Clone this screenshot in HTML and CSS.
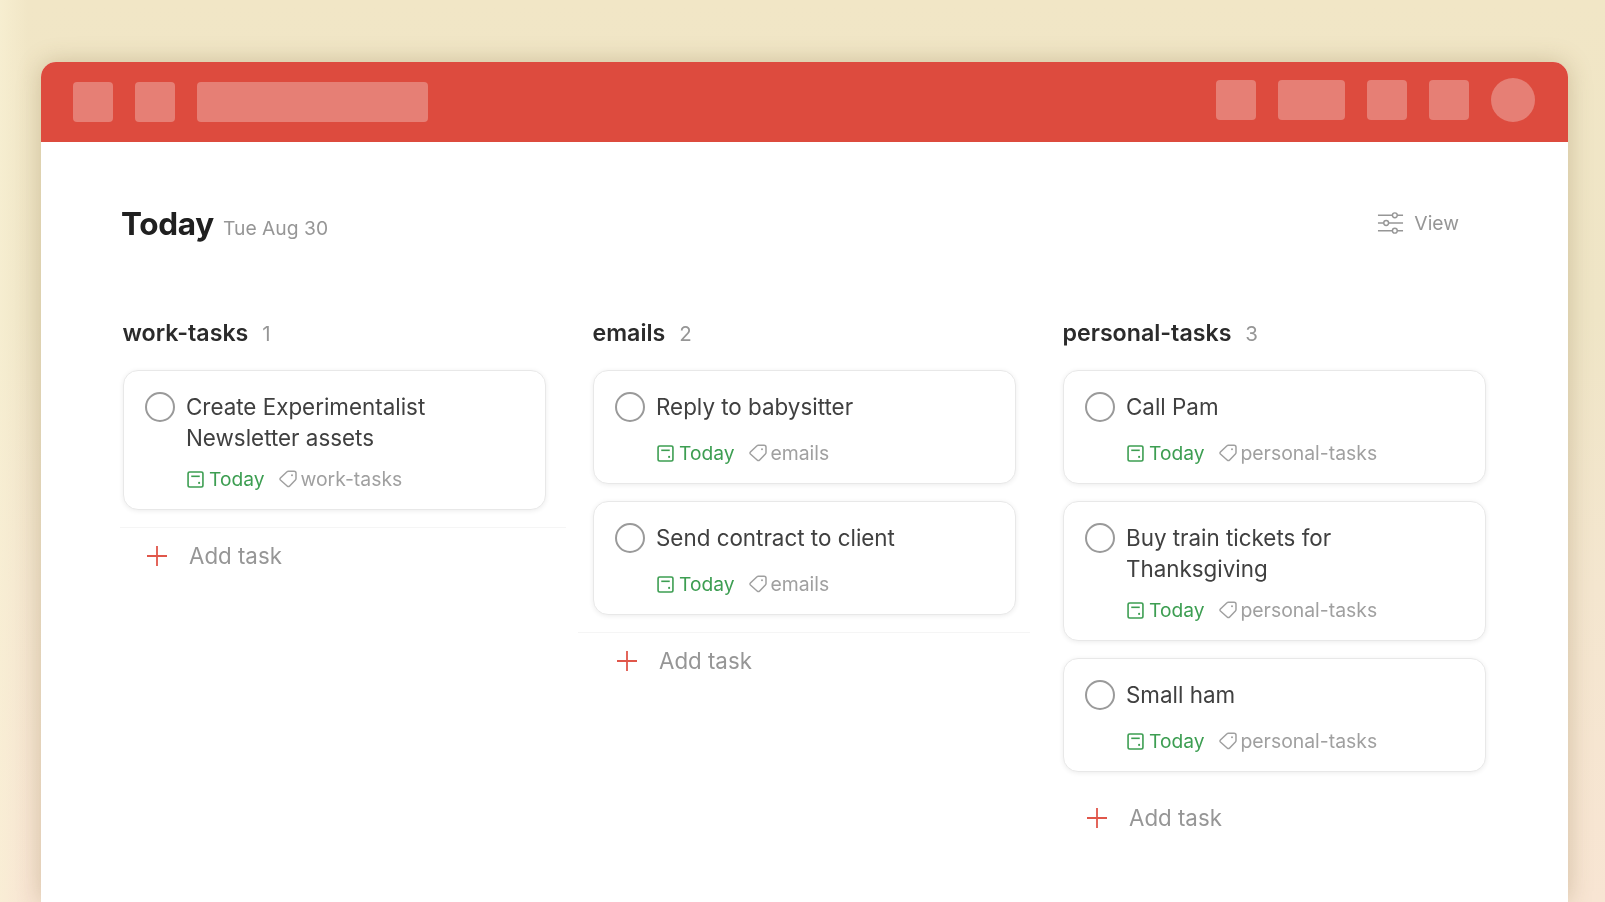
FILE: index.html
```html
<!DOCTYPE html>
<html lang="en">
<head>
<meta charset="utf-8">
<title>Today</title>
<link rel="stylesheet" href="styles.css">
</head>
<body>
<svg class="defs" width="0" height="0" aria-hidden="true">
  <symbol id="cal" viewBox="0 0 16 16"><rect x="1" y="1" width="14" height="14" rx="1.6" fill="none" stroke="currentColor" stroke-width="1.5"/><path d="M4 5h8" fill="none" stroke="currentColor" stroke-width="1.5"/><circle cx="11.4" cy="11.2" r="1" fill="currentColor"/></symbol>
  <symbol id="tag" viewBox="0 0 18 18"><path d="M9.4 1.2h5.6a2 2 0 0 1 2 2v5.4a2 2 0 0 1-.6 1.4l-6 6.2a1.4 1.4 0 0 1-2 0L1.4 10a1.4 1.4 0 0 1 0-2l6.6-6.2a2 2 0 0 1 1.4-.6z" fill="none" stroke="currentColor" stroke-width="1.5" stroke-linejoin="round"/><circle cx="13" cy="5.2" r="1" fill="currentColor"/></symbol>
  <symbol id="plus" viewBox="0 0 22 22"><path d="M11 1v20M1 11h20" fill="none" stroke="currentColor" stroke-width="1.8"/></symbol>
</svg>
<main class="window">
  <header class="topbar">
    <span class="ph sq"></span>
    <span class="ph sq"></span>
    <span class="ph search"></span>
    <div class="actions">
      <span class="ph sq"></span>
      <span class="ph wide"></span>
      <span class="ph sq"></span>
      <span class="ph sq"></span>
      <span class="ph avatar"></span>
    </div>
  </header>
  <section class="content">
    <div class="heading">
      <h1 class="title">Today</h1>
      <span class="date">Tue Aug 30</span>
      <button class="view">
        <svg class="view-icon" viewBox="0 0 28 24" aria-hidden="true"><g fill="none" stroke="currentColor" stroke-width="1.5"><path d="M1 4h15M21 4h6M1 12h6M12 12h15M1 20h15M21 20h6"/><circle cx="18.5" cy="4" r="2.5"/><circle cx="9.5" cy="12" r="2.5"/><circle cx="18.5" cy="20" r="2.5"/></g></svg>
        View
      </button>
    </div>
    <div class="board">
      <div class="column">
        <h2 class="col-title">work-tasks <span class="count">1</span></h2>
        <article class="card">
          <span class="check"></span>
          <div class="body">
            <p class="name">Create Experimentalist Newsletter assets</p>
            <div class="meta"><span class="today"><svg class="cal"><use href="#cal"/></svg>Today</span><span class="label"><svg class="tag"><use href="#tag"/></svg>work-tasks</span></div>
          </div>
        </article>
        <div class="add ruled"><svg class="plus"><use href="#plus"/></svg>Add task</div>
      </div>
      <div class="column">
        <h2 class="col-title">emails <span class="count">2</span></h2>
        <article class="card">
          <span class="check"></span>
          <div class="body">
            <p class="name">Reply to babysitter</p>
            <div class="meta"><span class="today"><svg class="cal"><use href="#cal"/></svg>Today</span><span class="label"><svg class="tag"><use href="#tag"/></svg>emails</span></div>
          </div>
        </article>
        <article class="card">
          <span class="check"></span>
          <div class="body">
            <p class="name">Send contract to client</p>
            <div class="meta"><span class="today"><svg class="cal"><use href="#cal"/></svg>Today</span><span class="label"><svg class="tag"><use href="#tag"/></svg>emails</span></div>
          </div>
        </article>
        <div class="add ruled ruled-wide"><svg class="plus"><use href="#plus"/></svg>Add task</div>
      </div>
      <div class="column">
        <h2 class="col-title">personal-tasks <span class="count">3</span></h2>
        <article class="card">
          <span class="check"></span>
          <div class="body">
            <p class="name">Call Pam</p>
            <div class="meta"><span class="today"><svg class="cal"><use href="#cal"/></svg>Today</span><span class="label"><svg class="tag"><use href="#tag"/></svg>personal-tasks</span></div>
          </div>
        </article>
        <article class="card">
          <span class="check"></span>
          <div class="body">
            <p class="name">Buy train tickets for Thanksgiving</p>
            <div class="meta"><span class="today"><svg class="cal"><use href="#cal"/></svg>Today</span><span class="label"><svg class="tag"><use href="#tag"/></svg>personal-tasks</span></div>
          </div>
        </article>
        <article class="card">
          <span class="check"></span>
          <div class="body">
            <p class="name">Small ham</p>
            <div class="meta"><span class="today"><svg class="cal"><use href="#cal"/></svg>Today</span><span class="label"><svg class="tag"><use href="#tag"/></svg>personal-tasks</span></div>
          </div>
        </article>
        <div class="add"><svg class="plus"><use href="#plus"/></svg>Add task</div>
      </div>
    </div>
  </section>
</main>
</body>
</html>
```
FILE: styles.css
```css
* { box-sizing: border-box; }
html, body { height: 100%; }
body {
  margin: 0;
  height: 902px;
  overflow: hidden;
  padding: 62px 37px 0 41px;
  font-family: Inter, "Liberation Sans", sans-serif;
  background:
    linear-gradient(90deg, rgba(250, 243, 215, .6), rgba(250, 243, 215, 0) 28px),
    linear-gradient(180deg, #f1e6c6 0%, #efe5c6 35%, #f4e6cf 65%, #f8e5d3 100%);
}
.defs { position: absolute; }
.window {
  height: 840px;
  background: #fff;
  border-radius: 15px 15px 0 0;
  box-shadow: 0 0 24px rgba(120, 90, 40, .28);
  overflow: hidden;
  display: flex;
  flex-direction: column;
}
.topbar {
  flex: 0 0 80px;
  background: #dd4b3e;
  display: flex;
  align-items: center;
  gap: 22px;
  padding: 0 33px 0 32px;
}
.actions {
  margin-left: auto;
  margin-bottom: 4px;
  display: flex;
  align-items: center;
  gap: 22px;
}
.ph { display: block; height: 40px; background: #e67f75; border-radius: 4px; }
.sq { width: 40px; }
.search { width: 231px; }
.wide { width: 67px; }
.avatar { width: 44px; height: 44px; border-radius: 50%; }
.content { padding: 0 0 0 82px; filter: blur(.35px); }
.heading {
  display: flex;
  align-items: baseline;
  padding: 62px 109px 0 0;
  height: 176px;
}
.title { margin: 0 0 0 -2px; font-size: 31.5px; line-height: 40px; font-weight: 700; color: #202020; letter-spacing: -.3px; }
.date { margin-left: 9px; font-size: 19.3px; color: #969696; }
.view {
  margin-left: auto;
  display: flex;
  align-items: center;
  gap: 10px;
  border: 0;
  padding: 0;
  background: none;
  font: 19.3px Inter, "Liberation Sans", sans-serif;
  color: #969696;
}
.view-icon { width: 27px; height: 24px; }
.board {
  display: grid;
  grid-template-columns: repeat(3, 423px);
  column-gap: 47px;
  align-items: start;
}
.col-title {
  margin: 0 0 21px -.5px;
  font-size: 23.2px;
  line-height: 31px;
  font-weight: 600;
  color: #2b2b2b;
  height: 31px;
}
.count { margin-left: 8px; font-weight: 400; font-size: 20.5px; color: #969696; }
.card {
  display: flex;
  gap: 11px;
  background: #fff;
  border: 1.5px solid #e8e8e8;
  border-radius: 15px;
  box-shadow: 0 1px 5px rgba(0, 0, 0, .08);
  padding: 20px 21px 17px;
  margin-bottom: 17px;
}
.check {
  flex: 0 0 30px;
  height: 30px;
  margin-top: 1px;
  border: 2px solid #9a9a9a;
  border-radius: 50%;
}
.body { flex: 1; min-width: 0; }
.name { margin: 1px 0 -1px; padding-right: 90px; min-height: 35px; font-size: 22.4px; line-height: 30.7px; color: #404040; }
.meta { display: flex; align-items: center; gap: 15px; margin-top: 14px; font-size: 19.2px; line-height: 26px; }
.today { display: flex; align-items: center; gap: 5px; color: #3d9e52; }
.today .cal { margin-left: 1px; }
.label { display: flex; align-items: center; gap: 3px; color: #a0a0a0; font-size: 19.4px; }
.cal { width: 17px; height: 17px; }
.tag { width: 18px; height: 18px; }
.add {
  display: flex;
  align-items: center;
  gap: 21px;
  margin-left: 23px;
  font-size: 22.3px;
  line-height: 30px;
  color: #969696;
  padding-top: 14px;
  position: relative;
}
.ruled::before {
  content: "";
  position: absolute;
  top: 0;
  left: -26px;
  right: -20px;
  border-top: 1px solid #f5f5f5;
}
.ruled-wide::before { left: -38px; right: -14px; }
.plus { width: 22px; height: 22px; color: #e0564a; }
```
